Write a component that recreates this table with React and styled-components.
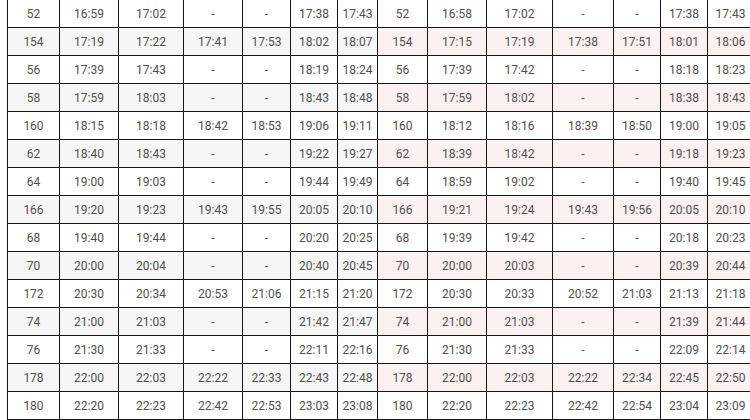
import React from 'react';
import styled, { createGlobalStyle } from 'styled-components';

const GlobalStyle = createGlobalStyle`
  html, body {
    margin: 0;
    padding: 0;
    background: #fff;
    overflow: hidden;
  }
`

const Wrap = styled.div`
  padding-left: 7px;
  margin-top: -1px;
  width: 760px;
`

const Table = styled.table`
  border-collapse: collapse;
  table-layout: fixed;
  width: 747px;
  font-family: Roboto, "Liberation Sans", Arial, sans-serif;
  font-size: 12px;
  color: #505050;
`

const Row = styled.tr`
  height: 28px;
`

const Cell = styled.td`
  border: 1px solid #161616;
  padding: 0;
  text-align: center;
  white-space: nowrap;
  overflow: visible;
  background: ${props => props.$striped ? (props.$side === 'right' ? '#fdf0f0' : '#f6f6f6') : '#fff'};
`

const widths = [52, 59, 65, 59, 48, 47, 40, 50, 59, 66, 61, 47, 47, 46];

const rows = [
  ['52', '16:59', '17:02', '-', '-', '17:38', '17:43', '52', '16:58', '17:02', '-', '-', '17:38', '17:43'],
  ['154', '17:19', '17:22', '17:41', '17:53', '18:02', '18:07', '154', '17:15', '17:19', '17:38', '17:51', '18:01', '18:06'],
  ['56', '17:39', '17:43', '-', '-', '18:19', '18:24', '56', '17:39', '17:42', '-', '-', '18:18', '18:23'],
  ['58', '17:59', '18:03', '-', '-', '18:43', '18:48', '58', '17:59', '18:02', '-', '-', '18:38', '18:43'],
  ['160', '18:15', '18:18', '18:42', '18:53', '19:06', '19:11', '160', '18:12', '18:16', '18:39', '18:50', '19:00', '19:05'],
  ['62', '18:40', '18:43', '-', '-', '19:22', '19:27', '62', '18:39', '18:42', '-', '-', '19:18', '19:23'],
  ['64', '19:00', '19:03', '-', '-', '19:44', '19:49', '64', '18:59', '19:02', '-', '-', '19:40', '19:45'],
  ['166', '19:20', '19:23', '19:43', '19:55', '20:05', '20:10', '166', '19:21', '19:24', '19:43', '19:56', '20:05', '20:10'],
  ['68', '19:40', '19:44', '-', '-', '20:20', '20:25', '68', '19:39', '19:42', '-', '-', '20:18', '20:23'],
  ['70', '20:00', '20:04', '-', '-', '20:40', '20:45', '70', '20:00', '20:03', '-', '-', '20:39', '20:44'],
  ['172', '20:30', '20:34', '20:53', '21:06', '21:15', '21:20', '172', '20:30', '20:33', '20:52', '21:03', '21:13', '21:18'],
  ['74', '21:00', '21:03', '-', '-', '21:42', '21:47', '74', '21:00', '21:03', '-', '-', '21:39', '21:44'],
  ['76', '21:30', '21:33', '-', '-', '22:11', '22:16', '76', '21:30', '21:33', '-', '-', '22:09', '22:14'],
  ['178', '22:00', '22:03', '22:22', '22:33', '22:43', '22:48', '178', '22:00', '22:03', '22:22', '22:34', '22:45', '22:50'],
  ['180', '22:20', '22:23', '22:42', '22:53', '23:03', '23:08', '180', '22:20', '22:23', '22:42', '22:54', '23:04', '23:09'],
];

export default function App() {
  return (
    <>
      <GlobalStyle />
      <Wrap>
        <Table>
          <colgroup>
            {widths.map((w, i) => <col key={i} style={{ width: w }} />)}
          </colgroup>
          <tbody>
            {rows.map((r, ri) => (
              <Row key={ri}>
                {r.map((v, ci) => (
                  <Cell key={ci} $striped={ri % 2 === 1} $side={ci >= 7 ? 'right' : 'left'}>{v}</Cell>
                ))}
              </Row>
            ))}
          </tbody>
        </Table>
      </Wrap>
    </>
  );
}
